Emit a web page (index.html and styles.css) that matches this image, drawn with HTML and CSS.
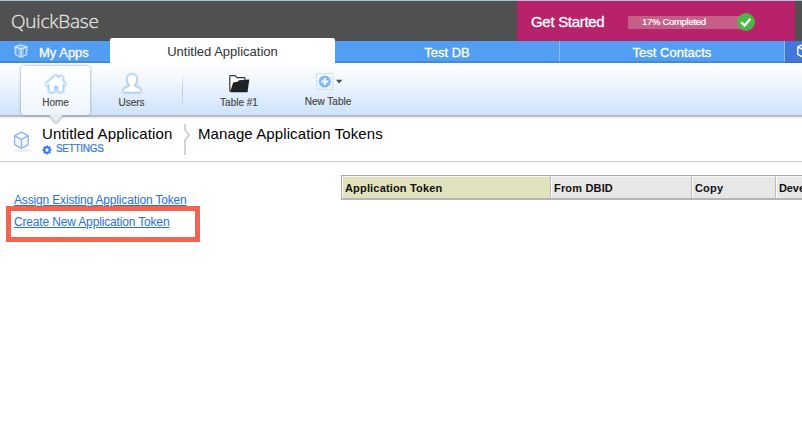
FILE: index.html
```html
<!DOCTYPE html>
<html lang="en">
<head>
<meta charset="utf-8">
<title>Manage Application Tokens</title>
<link rel="stylesheet" href="styles.css">
</head>
<body>
<svg width="0" height="0" class="defs">
  <symbol id="cube" viewBox="0 0 18 18"><path d="M9 1.2 16 4.4V12.8L9 16.6 2 12.8V4.4ZM2 4.4 9 8 16 4.4M9 8V16.6" fill="none" stroke="currentColor" stroke-width="1.7" stroke-linejoin="round"/></symbol>
</svg>
<header class="top">
  <div class="logo">QuickBase</div>
  <div class="started">
    <span class="started-label">Get Started</span>
    <div class="progress"><span>17% Completed</span>
      <svg class="check" viewBox="0 0 18 18"><circle cx="9" cy="9" r="9" fill="#4db545"/><path d="M4.2 9.2 7.6 12.5 13.4 5.8" fill="none" stroke="#fff" stroke-width="2.4"/></svg>
    </div>
  </div>
</header>
<nav class="tabs">
  <a class="tab apps"><svg class="apps-icon" viewBox="0 0 14 14"><path d="M7 .8 13.2 2.6 12.6 10.8 7 13.4 1.4 10.8.8 2.6Z" fill="#86bbfa" stroke="#d5e9ff"/><path d="M1 2.8 7 5 13 2.8M7 5V13" fill="none" stroke="#e2f0ff"/><path d="M3.5 5V10.5M10.5 5V10.5" stroke="#4f93e6"/></svg><span>My Apps</span></a>
  <a class="tab active"><span>Untitled Application</span></a>
  <a class="tab db"><span>Test DB</span></a>
  <a class="tab contacts"><span>Test Contacts</span></a>
  <a class="tab more"><svg class="more-icon"><use href="#cube"/></svg></a>
</nav>
<div class="toolbar">
  <a class="tool home">
    <svg class="tool-icon glow" viewBox="0 0 24 24"><path d="M2 11.8 11.8 3.5 15.5 6.4V4.5H18.6V9L21.5 11.8 20.3 13 18.8 12V19.8H14V14.2H10.2V19.8H5.2V12.2L3.4 13.3Z" fill="#fff" stroke="#cfe1fb" stroke-width=".6" stroke-linejoin="round"/></svg>
    <span>Home</span><i class="pointer"></i>
  </a>
  <a class="tool users">
    <svg class="tool-icon glow" viewBox="0 0 24 24"><path d="M12 2.6C8.8 2.6 7.4 4.2 7.7 7.4 7.8 9.8 8.4 11.8 9.8 13 9.8 15.5 3.6 15.5 3.4 19Q3.4 20 4.4 20H19.6Q20.6 20 20.6 19C20.4 15.5 14.2 15.5 14.2 13 15.6 11.8 16.2 9.8 16.3 7.4 16.6 4.2 15.2 2.6 12 2.6Z" fill="#fff" stroke="#c8ddfa" stroke-width=".6"/></svg>
    <span>Users</span>
  </a>
  <i class="divider"></i>
  <a class="tool table">
    <svg class="tool-icon" viewBox="0 0 24 24"><path d="M2.8 19.5V4.5Q2.8 3.7 3.6 3.7H8L10 5.7H17.2Q18 5.7 18 6.5V9" fill="#fff" stroke="#333" stroke-width="1.2"/><path d="M6.2 10.4 10.5 9.8 12 8.2 22.3 7.6 20.5 20.2H3Z" fill="#202326"/></svg>
    <span>Table #1</span>
  </a>
  <a class="tool new">
    <svg class="new-icon" viewBox="0 0 28 18"><rect x=".5" y=".5" width="16.5" height="16" fill="none" stroke="#a9d0f8" stroke-dasharray="1.5 1.2"/><circle cx="8.8" cy="8.5" r="6" fill="#83b8f4"/><path d="M8.8 5V12M5.3 8.5H12.3" stroke="#fff" stroke-width="2"/><path d="M20 6.8H26.4L23.2 10.6Z" fill="#505050"/></svg>
    <span>New Table</span>
  </a>
</div>
<section class="heading">
  <svg class="app-icon" viewBox="0 0 22 22"><ellipse cx="11" cy="19.5" rx="10" ry="1.4" fill="#ececec"/><path d="M10.4 1.2 17.2 4.6V13.6L10.4 17.4 3.6 13.6V4.6ZM3.6 4.6 10.4 8.6 17.2 4.6M10.4 8.6V17.4" fill="#f4f8ff" stroke="#91b4ed" stroke-width="1.3" stroke-linejoin="round"/></svg>
  <div class="app">
    <h1>Untitled Application</h1>
    <a class="settings"><svg class="gear" viewBox="0 0 12 12"><circle cx="6" cy="6" r="3.2" fill="none" stroke="#3479e0" stroke-width="2.4"/><path d="M6 .5V2.5M6 9.5V11.5M.5 6H2.5M9.5 6H11.5M2.1 2.1 3.4 3.4M8.6 8.6 9.9 9.9M9.9 2.1 8.6 3.4M3.4 8.6 2.1 9.9" stroke="#3479e0" stroke-width="2"/></svg><span>SETTINGS</span></a>
  </div>
  <svg class="crumb" viewBox="0 0 8 32"><path d="M2 0V6L6.2 11 2 16V31" fill="none" stroke="#ccc" stroke-width="1.7"/></svg>
  <h2>Manage Application Tokens</h2>
</section>
<main>
  <div class="links">
    <a class="assign">Assign Existing Application Token</a>
    <div class="marked"><a class="create">Create New Application Token</a></div>
  </div>
  <div class="grid">
    <div class="cell token"><span>Application Token</span></div>
    <div class="cell from"><span>From DBID</span></div>
    <div class="cell copy"><span>Copy</span></div>
    <div class="cell dev"><span>Deve</span></div>
  </div>
</main>
</body>
</html>
```
FILE: styles.css
```css
* { box-sizing: border-box; }
body { margin: 0; width: 802px; height: 427px; overflow: hidden; background: #fff; font-family: "Liberation Sans", Arial, sans-serif; color: #111; }
svg { display: block; flex: none; }
span, h1, h2, a { white-space: nowrap; }
.defs { position: absolute; }
.top { height: 41px; border-top: 1px solid #a9c7dc; background: #505050; display: flex; justify-content: space-between; }
.logo { font: 300 19px/41px "Open Sans", sans-serif; color: #e4e4e4; padding-left: 11px; letter-spacing: -.2px; -webkit-text-stroke: .3px #e4e4e4; }
.started { width: 278px; margin-right: 7px; background: #b8226a; display: flex; align-items: center; padding-left: 14px; color: #fff; }
.started-label { width: 97px; font-size: 15px; letter-spacing: -.3px; -webkit-text-stroke: .3px #fff; padding-top: 1px; }
.progress { width: 118px; height: 13px; background: #c65f88; position: relative; margin-top: 3px; padding-left: 14px; font-size: 9.5px; line-height: 11px; letter-spacing: -.3px; -webkit-text-stroke: .2px #fff; }
.check { position: absolute; width: 18px; height: 18px; right: -9px; top: -3px; }
.tabs { height: 22px; display: flex; align-items: flex-end; background: #519ef3; }
.tab { flex: none; height: 22px; display: flex; align-items: center; justify-content: center; color: #fff; font-size: 13px; border-bottom: 2px solid #3d8ddd; -webkit-text-stroke: .3px #fff; }
.tab span { position: relative; top: 1px; }
.apps { width: 110px; justify-content: flex-start; padding-left: 14px; }
.apps-icon { width: 14px; height: 14px; margin-right: 11px; }
.active { width: 225px; height: 25px; background: #fff; border: 0; color: #333; -webkit-text-stroke: 0; border-radius: 2px 2px 0 0; }
.db { width: 225px; border-right: 1px solid #87bdf8; }
.contacts { width: 225px; border-right: 1px solid #87bdf8; }
.more { width: 17px; background: #4078db; border-bottom-color: #3c70d0; justify-content: flex-start; padding-left: 11px; overflow: hidden; }
.more-icon { width: 16px; height: 16px; }
.toolbar { height: 54px; background: linear-gradient(#fff, #f1f7fe 35%, #cde2fa); border-bottom: 2px solid #b9bdc2; box-shadow: 0 1px 1px #ededed; display: flex; padding-left: 21px; position: relative; z-index: 1; }
.tool { display: flex; flex-direction: column; align-items: center; font-size: 10px; color: #444; -webkit-text-stroke: .15px #444; }
.tool-icon { width: 24px; height: 24px; }
.glow { filter: drop-shadow(0 0 1px #6fa8f5) drop-shadow(0 0 1px #a5c9fa); }
.tool span { line-height: 12px; margin-top: 1px; }
.home { width: 69px; height: 49px; margin-top: 3px; padding-top: 6px; border-radius: 4px; background: linear-gradient(#fff, #eff5fd); box-shadow: 0 0 3px #8794a6; position: relative; }
.pointer { position: absolute; bottom: -8px; border: 7px solid transparent; border-top: 8px solid #e4edf8; border-bottom: 0; filter: drop-shadow(0 1px 1px #9faab8); }
.users { width: 83px; padding-top: 9px; }
.divider { width: 1px; height: 34px; margin: 11px 0 0 9px; background: linear-gradient(#e5f1ff, #a9ccf3, #d2e6fc); }
.table { width: 112px; padding-top: 9px; }
.new { width: 66px; padding-top: 10px; }
.new-icon { width: 28px; height: 18px; margin-left: 3px; }
.new span { margin-top: 5px; }
.heading { height: 45px; border-bottom: 1px solid #ccc; display: flex; padding-left: 11px; }
.app-icon { width: 22px; height: 22px; margin-top: 14px; }
.app { width: 141px; margin-left: 9px; padding-top: 8px; }
h1, h2 { margin: 0; font-size: 15px; line-height: 17px; font-weight: 400; color: #000; letter-spacing: .15px; }
.settings { display: flex; align-items: center; font-size: 10px; letter-spacing: -.3px; line-height: 12px; color: #3479e0; margin-top: 1px; -webkit-text-stroke: .2px #3479e0; }
.gear { width: 10px; height: 10px; margin: 1px 4px 0 0; }
.crumb { width: 8px; height: 32px; margin-top: 7px; }
h2 { margin: 8px 0 0 7px; letter-spacing: .1px; }
main { display: flex; }
.links { flex: none; width: 341px; padding: 31px 0 0 6px; font-size: 12px; line-height: 14px; letter-spacing: -.16px; color: #2b6fdd; text-decoration: underline; }
.assign { display: block; margin-left: 8px; }
.marked { width: 194px; height: 36px; border: 5px solid #f26452; padding: 4px 3px; margin-top: -1px; }
.grid { flex: none; width: 461px; height: 25px; margin-top: 13px; border: 1px solid #aaa; border-right: 0; border-bottom: 2px solid #b5b5b5; display: flex; font-size: 11px; font-weight: 700; letter-spacing: .17px; }
.cell { flex: none; border-right: 1px solid #bbb; border-left: 1px solid #fff; border-top: 1px solid #f6f6f6; background: #e7e7e7; line-height: 22px; padding-left: 2px; }
.token { width: 209px; background: #e1e2bd; }
.from { width: 141px; }
.copy { width: 84px; }
.dev { width: 26px; border-right: 0; letter-spacing: -.1px; }
```
